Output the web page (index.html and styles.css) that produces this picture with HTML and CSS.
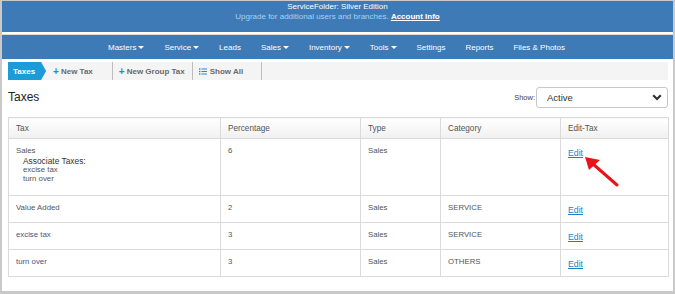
FILE: index.html
```html
<!DOCTYPE html>
<html lang="en">
<head>
    <meta charset="UTF-8">
    <meta name="viewport" content="width=device-width, initial-scale=1.0">
    <title>Taxes</title>
    <link rel="stylesheet" href="styles.css">
</head>
<body>
    <div class="frame">
        <div class="top-banner">
            <div class="edition">ServiceFolder: Silver Edition</div>
            <div class="upgrade">Upgrade for additional users and branches. <a href="#">Account Info</a></div>
        </div>
        <div class="nav">
            <span class="nav-item drop">Masters</span>
            <span class="nav-item drop">Service</span>
            <span class="nav-item">Leads</span>
            <span class="nav-item drop">Sales</span>
            <span class="nav-item drop">Inventory</span>
            <span class="nav-item drop">Tools</span>
            <span class="nav-item">Settings</span>
            <span class="nav-item">Reports</span>
            <span class="nav-item">Files &amp; Photos</span>
        </div>

        <div class="content">
            <div class="tabs">
                <span class="tab current">Taxes</span>
                <span class="tab new-tax"><span class="plus">+</span> New Tax</span>
                <span class="tab new-group"><span class="plus">+</span> New Group Tax</span>
                <span class="tab show-all">
                    <svg class="list-icon" width="8" height="7" viewBox="0 0 8 7">
                        <rect x="0" y="0.3" width="1.4" height="1.4" fill="#1a8fd0"/>
                        <rect x="0" y="2.8" width="1.4" height="1.4" fill="#1a8fd0"/>
                        <rect x="0" y="5.3" width="1.4" height="1.4" fill="#1a8fd0"/>
                        <rect x="2.4" y="0.5" width="5.6" height="1" fill="#1a8fd0"/>
                        <rect x="2.4" y="3" width="5.6" height="1" fill="#1a8fd0"/>
                        <rect x="2.4" y="5.5" width="5.6" height="1" fill="#1a8fd0"/>
                    </svg>
                    Show All
                </span>
            </div>

            <div class="title-row">
                <h2>Taxes</h2>
                <div class="filter">
                    <span class="show-label">Show:</span>
                    <div class="select">
                        <span>Active</span>
                        <svg width="10" height="7" viewBox="0 0 10 7">
                            <polyline points="1.2,1.3 5,5 8.8,1.3" fill="none" stroke="#333" stroke-width="2.2"/>
                        </svg>
                    </div>
                </div>
            </div>

            <div class="table-wrap">
                <table class="tax-table">
                    <tr class="head">
                        <th class="c-tax">Tax</th>
                        <th class="c-pct">Percentage</th>
                        <th class="c-type">Type</th>
                        <th class="c-cat">Category</th>
                        <th class="c-edit">Edit-Tax</th>
                    </tr>
                    <tr class="group">
                        <td>
                            Sales
                            <div class="assoc">
                                <div class="assoc-title">Associate Taxes:</div>
                                <div>excise tax</div>
                                <div>turn over</div>
                            </div>
                        </td>
                        <td>6</td>
                        <td>Sales</td>
                        <td></td>
                        <td><a class="edit" href="#">Edit</a></td>
                    </tr>
                    <tr>
                        <td>Value Added</td>
                        <td>2</td>
                        <td>Sales</td>
                        <td>SERVICE</td>
                        <td><a class="edit" href="#">Edit</a></td>
                    </tr>
                    <tr>
                        <td class="sub-tax">excise tax</td>
                        <td>3</td>
                        <td>Sales</td>
                        <td>SERVICE</td>
                        <td><a class="edit" href="#">Edit</a></td>
                    </tr>
                    <tr>
                        <td class="sub-tax">turn over</td>
                        <td>3</td>
                        <td>Sales</td>
                        <td>OTHERS</td>
                        <td><a class="edit" href="#">Edit</a></td>
                    </tr>
                </table>

                <svg class="pointer" width="40" height="34" viewBox="0 0 40 34">
                    <line x1="33" y1="29" x2="9" y2="8" stroke="#e8141a" stroke-width="3" stroke-linecap="round"/>
                    <polygon points="1,1 16,4 5,14" fill="#e8141a"/>
                </svg>
            </div>
        </div>
    </div>
</body>
</html>
```

FILE: styles.css
```css
body {
    margin: 0;
    font-family: "Liberation Sans", Arial, sans-serif;
    background: #fff;
}
.frame {
    box-sizing: border-box;
    height: 294px;
    border-style: solid;
    border-color: #c9c9c9;
    border-width: 1px 2px 3px 2px;
    background: #fff;
}
.top-banner {
    height: 31px;
    background: #3e7ab5;
    text-align: center;
    font-size: 8px;
    line-height: 9.5px;
    padding-top: 1px;
    box-sizing: border-box;
}
.edition {
    color: #fff;
}
.upgrade {
    color: #a3d3f7;
}
.upgrade a {
    color: #fff;
    font-weight: bold;
    text-decoration: underline;
}
.nav {
    margin-top: 2px;
    border-top: 1px solid #dcdcdc;
    height: 24px;
    background: #3e7ab5;
    display: flex;
    justify-content: center;
    align-items: center;
    padding-right: 2px;
}
.nav-item {
    color: #fff;
    font-size: 8px;
    padding: 0 10px;
}
.nav-item.drop::after {
    content: "";
    display: inline-block;
    margin-left: 2px;
    vertical-align: middle;
    border-left: 3px solid transparent;
    border-right: 3px solid transparent;
    border-top: 3px solid #fff;
}
.content {
    padding: 3px 5px 0 6px;
}
.tabs {
    display: flex;
    height: 18px;
    background: #f4f4f4;
    align-items: stretch;
}
.tab {
    display: flex;
    align-items: center;
    font-size: 8px;
    font-weight: bold;
    color: #6a6a6a;
    border-right: 1px solid #bdbdbd;
}
.tab .plus {
    color: #1a8fd0;
    margin-right: 2px;
    font-size: 10px;
}
.tab.current {
    background: #1b9bd7;
    color: #fff;
    border-right: none;
    padding: 0 11px 0 5px;
    clip-path: polygon(0 0, calc(100% - 5px) 0, 100% 50%, calc(100% - 5px) 100%, 0 100%);
}
.tab.new-tax {
    padding: 0 19px 0 7px;
}
.tab.new-group {
    padding: 0 7px 0 6px;
}
.tab.show-all {
    padding: 0 18px 0 6px;
}
.list-icon {
    margin-right: 3px;
}
.title-row {
    display: flex;
    justify-content: space-between;
    align-items: center;
    height: 37px;
}
h2 {
    margin: 0 0 3px 0;
    font-size: 12px;
    font-weight: normal;
    color: #222;
}
.filter {
    display: flex;
    align-items: center;
    margin-top: -2px;
}
.show-label {
    font-size: 7.5px;
    color: #444;
    margin-right: 1px;
}
.select {
    box-sizing: border-box;
    width: 132px;
    height: 21px;
    border: 1px solid #c8c8c8;
    border-radius: 3px;
    display: flex;
    align-items: center;
    justify-content: space-between;
    padding: 0 5px 0 10px;
    font-size: 9.5px;
    color: #333;
}
.table-wrap {
    position: relative;
}
.tax-table {
    width: 661px;
    border-collapse: collapse;
    border: 1px solid #dadada;
    font-size: 7.8px;
    color: #555;
}
.tax-table th,
.tax-table td {
    border: 1px solid #dadada;
    text-align: left;
    vertical-align: top;
    padding: 6px 7px 0 7px;
    line-height: 11px;
}
.tax-table th {
    font-weight: normal;
    font-size: 8.2px;
    color: #555;
    height: 21px;
    box-sizing: border-box;
    vertical-align: middle;
    padding-top: 0;
    background: linear-gradient(#ffffff, #f0f0f0);
}
.c-tax { width: 212px; }
.c-pct { width: 140px; }
.c-type { width: 80px; }
.c-cat { width: 120px; }
.tax-table tr.group td {
    height: 57px;
    box-sizing: border-box;
}
.tax-table tr td {
    height: 27px;
    box-sizing: border-box;
}
.assoc {
    padding-left: 7px;
    line-height: 8.5px;
    font-size: 7.8px;
}
.assoc-title {
    color: #333;
    font-size: 8.4px;
    line-height: 10px;
}
.sub-tax {
    color: #44568a;
}
.edit {
    display: inline-block;
    margin-top: 3px;
    color: #1a7fc4;
    font-size: 8.7px;
    text-decoration: underline;
}
.pointer {
    position: absolute;
    left: 576px;
    top: 39px;
}
```
